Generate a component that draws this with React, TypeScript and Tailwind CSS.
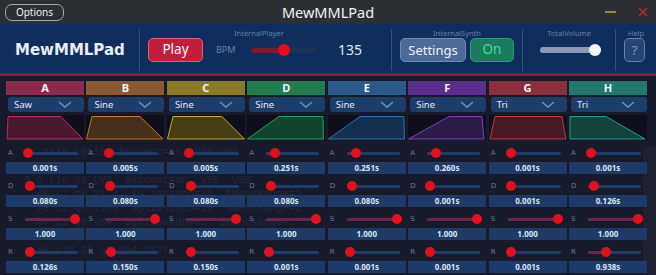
import React from 'react';

type Ch = {
  n: string;
  wave: string;
  head: string;
  fill: string;
  stroke: string;
  pts: string;
  vals: [string, string, number][];
};

const CH: Ch[] = [
  { n: 'A', wave: 'Saw', head: 'bg-[#8b2b4c]', fill: '#48182f', stroke: '#b3346a', pts: '1,24 2,1.5 55,1.5 77,24',
    vals: [['A', '0.001s', 0.0005], ['D', '0.080s', 0.04], ['S', '1.000', 1], ['R', '0.126s', 0.042]] },
  { n: 'B', wave: 'Sine', head: 'bg-[#8c5a31]', fill: '#46301c', stroke: '#c17a30', pts: '0.5,24 6,1.5 54,1.5 77,24',
    vals: [['A', '0.005s', 0.0025], ['D', '0.080s', 0.04], ['S', '1.000', 1], ['R', '0.150s', 0.05]] },
  { n: 'C', wave: 'Sine', head: 'bg-[#8a7a24]', fill: '#463e16', stroke: '#c4aa30', pts: '0.5,24 6,1.5 55,1.5 77.5,24',
    vals: [['A', '0.005s', 0.0025], ['D', '0.080s', 0.04], ['S', '1.000', 1], ['R', '0.150s', 0.05]] },
  { n: 'D', wave: 'Sine', head: 'bg-[#1f7d4f]', fill: '#12452e', stroke: '#27a262', pts: '0.5,24 32,1.5 76,1.5 76.5,24',
    vals: [['A', '0.251s', 0.1255], ['D', '0.080s', 0.04], ['S', '1.000', 1], ['R', '0.001s', 0.0003]] },
  { n: 'E', wave: 'Sine', head: 'bg-[#2a5a8b]', fill: '#15304f', stroke: '#3274b4', pts: '0.5,24 32,1.5 76,1.5 76.5,24',
    vals: [['A', '0.251s', 0.1255], ['D', '0.080s', 0.04], ['S', '1.000', 1], ['R', '0.001s', 0.0003]] },
  { n: 'F', wave: 'Sine', head: 'bg-[#5b2e8b]', fill: '#2a1c47', stroke: '#7b42ba', pts: '0.5,24 41,1.5 74,1.5 76,24',
    vals: [['A', '0.260s', 0.12], ['D', '0.001s', 0.0005], ['S', '1.000', 1], ['R', '0.001s', 0.0003]] },
  { n: 'G', wave: 'Tri', head: 'bg-[#8b2e3e]', fill: '#461a24', stroke: '#c2384a', pts: '1,24 6,1.5 73,1.5 77,24',
    vals: [['A', '0.001s', 0.0005], ['D', '0.001s', 0.0005], ['S', '1.000', 1], ['R', '0.001s', 0.0003]] },
  { n: 'H', wave: 'Tri', head: 'bg-[#1f7a6b]', fill: '#12443d', stroke: '#22a08a', pts: '1,24 1,1.5 37,1.5 76,24',
    vals: [['A', '0.001s', 0.0005], ['D', '0.126s', 0.063], ['S', '1.000', 1], ['R', '0.938s', 0.313]] },
];

const EDITOR_LINES = [
  '   t116 C@L16  $Accent=on  V30 V60',
  '',
  '3 C L16 o8 LV6  $accent=on  V50  V30',
  '  #B L1 o8 V127  $Glissando=16  $BendRange=2',
  '  #E L1 Q8 V100  $glissando=16  $BendRange=2',
  '  #F L1 Q8 V64  $glissando=32  $BendRange=2',
  '  #G L1 Q8 V64  $glissando=32  $BendRange=2',
  '  #H L16 Q8 o8 Q64 V127',
  '  #A L16 o8 V100',
];

function ParamSlider({ label, f }: { label: string; f: number }) {
  const pos = `calc(3px + ${f} * (100% - 6px))`;
  return (
    <div className="flex items-center h-[18px]">
      <span className="w-[19px] pl-[2px] text-[7px] leading-none text-[#6b7793] font-['DejaVu_Sans']">{label}</span>
      <div className="relative flex-1 mr-[6px] h-[3px] rounded-full bg-[#1f3b67]">
        <div className="absolute left-0 top-0 h-full rounded-full bg-[#5d2b4b]" style={{ width: pos }} />
        <div
          className="absolute top-1/2 w-[10px] h-[10px] rounded-full bg-[#e1101e] -translate-x-1/2 -translate-y-1/2"
          style={{ left: pos }}
        />
      </div>
    </div>
  );
}

function Column({ ch }: { ch: Ch }) {
  return (
    <div className="flex flex-col">
      <div className={`h-[14px] ${ch.head} text-center text-[11px] leading-[14px] font-bold text-[#f4f4f8]`}>{ch.n}</div>
      <div className="mt-[2px] ml-[2px] h-[15px] rounded-[3px] bg-[#1d3d6b] flex items-center justify-between pl-[6px] pr-[12px]">
        <span className="text-[9.5px] leading-none text-[#e6eaf2]">{ch.wave}</span>
        <svg width="14" height="7" viewBox="0 0 14 7">
          <path d="M1 1 L7 6 L13 1" fill="none" stroke="#6b8ec4" strokeWidth="1.6" />
        </svg>
      </div>
      <div className="mt-[3px] h-[25px] bg-[#0f0f1b]">
        <svg width="100%" height="25" viewBox="0 0 78 25" preserveAspectRatio="none">
          <polygon points={ch.pts} fill={ch.fill} stroke={ch.stroke} strokeWidth="1" vectorEffect="non-scaling-stroke" />
        </svg>
      </div>
      <div className="pt-[4px] flex flex-col gap-[3px]">
        {ch.vals.map(([l, v, f]) => (
          <div key={l} className="flex flex-col">
            <ParamSlider label={l} f={f} />
            <div className="h-[12px] bg-[#1d3b66] text-center text-[8px] leading-[12px] font-bold text-[#dfe5f0]">{v}</div>
          </div>
        ))}
      </div>
    </div>
  );
}

function Divider() {
  return <div className="w-px h-[42px] mt-[5px] bg-[#35507c]" />;
}

export default function App() {
  return (
    <div className="w-[656px] h-[275px] overflow-hidden bg-[#171a2b] font-['Noto_Sans',sans-serif]">
      {/* title bar */}
      <div className="h-[24px] bg-[#2b2f34] grid grid-cols-[1fr_auto_1fr] items-center">
        <div className="pl-[5px] flex">
          <button className="w-[59px] h-[17px] rounded-[7px] border border-[#a4a9af] text-[10px] leading-none text-[#eceff2]">
            Options
          </button>
        </div>
        <div className="text-[14.5px] leading-none text-[#f2f2f2] pt-[1px]">MewMMLPad</div>
        <div className="flex justify-end items-center pr-[8px]">
          <div className="w-[11px] h-[2px] bg-[#9c8a3c]" />
          <svg className="ml-[22px]" width="10" height="10" viewBox="0 0 10 10">
            <path d="M1 1 L9 9 M9 1 L1 9" stroke="#b52a2a" strokeWidth="1.6" />
          </svg>
        </div>
      </div>

      {/* header */}
      <div className="flex h-[49px] bg-[#0f2e5d]">
        <div className="w-[139px] flex items-center pl-[15px] pt-[3px] font-['DejaVu_Sans'] font-bold text-[15px] text-[#e9edf5]">
          MewMMLPad
        </div>
        <Divider />
        <div className="w-[251px] flex flex-col pt-[5px]">
          <div className="h-[9px] pl-[94px] text-[7.5px] leading-[9px] text-[#6b7fa6]">InternalPlayer</div>
          <div className="h-[24px] flex items-center pl-[8px]">
            <button className="w-[55px] h-[24px] rounded-[5px] bg-[#c21d3b] border border-[#d8627a] text-white text-[13.5px] leading-none">
              Play
            </button>
            <span className="ml-[13px] w-[35px] text-[9px] text-[#6d80a6]">BPM</span>
            <div className="relative w-[67px] h-[5px] rounded-full bg-[#1f3354]">
              <div className="absolute left-0 top-0 h-full w-[33px] rounded-full bg-[#7d1a2c]" />
              <div className="absolute left-[33px] top-1/2 w-[12px] h-[12px] rounded-full bg-[#e20c1a] -translate-x-1/2 -translate-y-1/2" />
            </div>
            <span className="ml-[20px] text-[14px] leading-none text-[#e4e8f0]">135</span>
          </div>
        </div>
        <Divider />
        <div className="w-[130px] flex flex-col pt-[5px]">
          <div className="h-[9px] text-center text-[7.5px] leading-[9px] text-[#6b7fa6]">InternalSynth</div>
          <div className="h-[24px] flex items-center pl-[8px] gap-[4px]">
            <button className="w-[66px] h-[24px] rounded-[5px] bg-[#4b6a9a] border border-[#7289b1] text-[#f2f4f8] text-[13px] leading-none">
              Settings
            </button>
            <button className="w-[44px] h-[24px] rounded-[5px] bg-[#1c7a5e] border border-[#2e9a77] text-[#3ee08c] text-[13.5px] leading-none">
              On
            </button>
          </div>
        </div>
        <Divider />
        <div className="w-[92px] flex flex-col pt-[5px]">
          <div className="h-[9px] text-center text-[7.5px] leading-[9px] text-[#6b7fa6]">TotalVolume</div>
          <div className="h-[24px] flex items-center pl-[17px]">
            <div className="relative w-[61px] h-[6px] rounded-full bg-[#8a9ab8]">
              <div className="absolute left-[55px] top-1/2 w-[12px] h-[12px] rounded-full bg-[#f4f5f8] -translate-x-1/2 -translate-y-1/2" />
            </div>
          </div>
        </div>
        <Divider />
        <div className="w-[40px] flex flex-col pt-[5px]">
          <div className="h-[9px] text-center text-[7.5px] leading-[9px] text-[#6b7fa6]">Help</div>
          <div className="h-[24px] flex items-center pl-[8px]">
            <button className="w-[21px] h-[24px] rounded-[5px] bg-[#244474] border border-[#6a7fa5] text-[#8195ba] text-[13px] leading-none">
              ?
            </button>
          </div>
        </div>
      </div>

      {/* accent line */}
      <div className="h-[3px] bg-[#7d1f3f]" />
      <div className="h-[5px]" />

      {/* channel panel over editor */}
      <div className="relative h-[194px]">
        <div className="absolute left-[24px] top-[64px] font-['Liberation_Mono',monospace] text-[10.5px] leading-[14px] text-[#252840] whitespace-pre">
          {EDITOR_LINES.map((l, i) => (
            <div key={i}>{l || ' '}</div>
          ))}
        </div>
        <div className="absolute right-0 top-[66px] bottom-0 w-[13px] bg-[#1f2131]" />
        <div className="relative grid grid-cols-8 gap-x-[2.5px] ml-[6px] w-[641px]">
          {CH.map((ch) => (
            <Column key={ch.n} ch={ch} />
          ))}
        </div>
      </div>
    </div>
  );
}
